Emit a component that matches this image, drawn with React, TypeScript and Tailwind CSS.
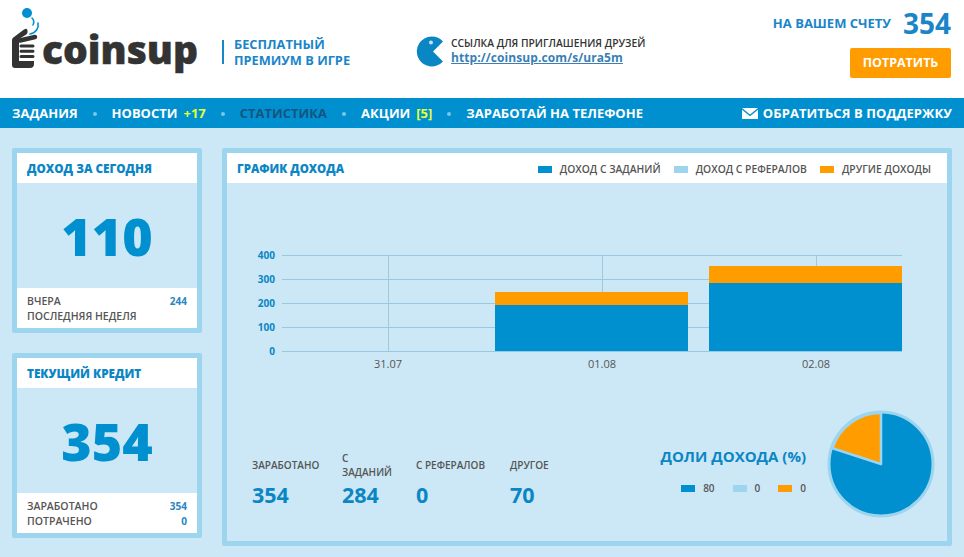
const font = { fontFamily: '"Open Sans", "Noto Sans", sans-serif' };

function Logo() {
  return (
    <div className="flex items-end w-[200px]">
      <svg width="31" height="70" viewBox="0 0 31 70" className="shrink-0">
        <circle cx="15" cy="7" r="5" fill="#0090d0" />
        <path d="M20 12c2 2 2 5 1 7" stroke="#0090d0" strokeWidth="1.600" fill="none" strokeLinecap="round" />
        <path d="M26 17c1 5-2 10-8 11" stroke="#0090d0" strokeWidth="1.600" fill="none" strokeLinecap="round" />
        <path d="M0 34q0-2 2-3l10-7.500q3-2 3.500 1t-2 4.500L7 33v22h15v3q0 4-4 4H3q-3 0-3-3z" fill="#333" />
        <path d="M8 34.500L23 31" stroke="#333" strokeWidth="4.500" strokeLinecap="round" />
        <path d="M9 40h12M9 45.200h12M9 50.400h12" stroke="#333" strokeWidth="3" strokeLinecap="round" />
      </svg>
      <span className="text-[39px] font-extrabold leading-none text-[#333] [-webkit-text-stroke:0.5px_#333] mb-[8px] -ml-[1px]">coinsup</span>
    </div>
  );
}

function NavDot() {
  return <span className="block w-[4px] h-[4px] rounded-full bg-[#7cc4e8]" />;
}

function Card({ title, value, rows }: { title: string; value: string; rows: [string, string][] }) {
  return (
    <div className="h-[185px] border-[5px] border-[#9dd5ee] rounded-[2px] flex flex-col">
      <div className="h-[30px] bg-white px-[10px] pt-[1px] flex items-center text-[11.700px] font-extrabold text-[#0b86c4]">{title}</div>
      <div className="flex-1 flex items-center justify-center text-[52px] font-extrabold text-[#0090d0] leading-none">{value}</div>
      <div className="h-[40px] bg-white px-[10px] flex flex-col justify-center gap-[1px]">
        {rows.map(([label, num]) => (
          <div key={label} className="flex justify-between text-[10.500px] leading-[14px] font-semibold text-[#555]">
            <span>{label}</span>
            <span className="text-[10px] font-bold text-[#2a85c0]">{num}</span>
          </div>
        ))}
      </div>
    </div>
  );
}

function Legend({ color, label }: { color: string; label: string }) {
  return (
    <div className="flex items-center gap-[8px]">
      <span className="w-[14px] h-[7px]" style={{ background: color }} />
      <span>{label}</span>
    </div>
  );
}

function Chart() {
  const ys = [72, 96, 120, 144, 168];
  const labels = ["400", "300", "200", "100", "0"];
  return (
    <svg width="720" height="200" viewBox="0 0 720 200" className="block">
      {ys.map((y, i) => (
        <g key={y}>
          <line x1="55" x2="675" y1={y + 0.5} y2={y + 0.5} stroke="#94cbe3" />
          <text x="48" y={y + 4} textAnchor="end" fontSize="10" fontWeight="700" fill="#0b86c4">
            {labels[i]}
          </text>
        </g>
      ))}
      {[161.5, 375.5, 589.5].map((x) => (
        <line key={x} x1={x} x2={x} y1="72" y2="168" stroke="#9fc8dc" />
      ))}
      <rect x="268" y="122" width="193" height="46" fill="#0090d0" />
      <rect x="268" y="109" width="193" height="13" fill="#ff9c00" />
      <rect x="482" y="100" width="193" height="68" fill="#0090d0" />
      <rect x="482" y="83" width="193" height="17" fill="#ff9c00" />
      {[
        [161, "31.07"],
        [375, "01.08"],
        [589, "02.08"],
      ].map(([x, t]) => (
        <text key={t} x={x} y="185" textAnchor="middle" fontSize="11" fill="#555">
          {t}
        </text>
      ))}
    </svg>
  );
}

function Pie() {
  return (
    <svg width="108" height="108" viewBox="0 0 108 108" className="block">
      <circle cx="54" cy="54" r="52" fill="#0090d0" stroke="#9dd5ee" strokeWidth="3" />
      <path d="M54 54L54 3A51 51 0 0 0 5.500 38.200Z" fill="#ff9c00" stroke="#9dd5ee" strokeWidth="2.500" strokeLinejoin="round" />
    </svg>
  );
}

function Stat({ label, value, className }: { label: string; value: string; className: string }) {
  return (
    <div className={className}>
      <div className="h-[34px] flex items-center text-[10px] leading-[14px] font-semibold text-[#555]">{label}</div>
      <div className="text-[21.500px] leading-[26px] font-bold text-[#0b86c4]">{value}</div>
    </div>
  );
}

export default function App() {
  return (
    <div style={font} className="w-[964px] h-[557px] overflow-hidden bg-[#cce8f6]">
      <header className="h-[98px] bg-white flex pl-[12px] pr-[13px] relative">
        <div className="mt-[6px] h-[70px]">
          <Logo />
        </div>
        <div className="ml-[10px] mt-[40px] h-[24px] border-l-2 border-[#1a85c8]" />
        <div className="ml-[10px] mt-[36px] text-[12.800px] leading-[16px] font-bold text-[#1a85c8]">
          <div>БЕСПЛАТНЫЙ</div>
          <div>ПРЕМИУМ В ИГРЕ</div>
        </div>
        <div className="ml-[66px] mt-[36px] flex">
          <svg width="31" height="31" viewBox="0 0 31 31" className="shrink-0">
            <path d="M15.500 0.500A15 15 0 0 1 27 5.500L17 15.500L27 25.500A15 15 0 1 1 15.500 0.500Z" fill="#0b86c4" />
            <circle cx="15" cy="6.500" r="2" fill="#bfe2f4" />
          </svg>
          <div className="ml-[4px]">
            <div className="text-[10.300px] leading-[14px] font-semibold text-[#333]">ССЫЛКА ДЛЯ ПРИГЛАШЕНИЯ ДРУЗЕЙ</div>
            <a className="block text-[12px] leading-[16px] tracking-[0.08px] font-bold text-[#3a7fb5] underline">http://coinsup.com/s/ura5m</a>
          </div>
        </div>
        <div className="ml-auto flex flex-col items-end pt-[6px]">
          <div className="flex items-center h-[34px]">
            <span className="mt-[2px] text-[13px] font-bold text-[#1a85c8]">НА ВАШЕМ СЧЕТУ</span>
            <span className="ml-[12px] text-[28px] leading-none font-bold text-[#1a85c8]">354</span>
          </div>
          <button className="mt-[8px] w-[101px] h-[30px] rounded-[2px] bg-[#ff9c00] text-white text-[12.500px] font-bold">ПОТРАТИТЬ</button>
        </div>
      </header>

      <nav className="h-[30px] pt-[1px] bg-[#0090d0] flex items-center px-[12px] text-[13px] font-bold text-white">
        <span>ЗАДАНИЯ</span>
        <span className="mx-[15px]"><NavDot /></span>
        <span>НОВОСТИ</span>
        <span className="ml-[6px] text-[#e4ff3a]">+17</span>
        <span className="mx-[15px]"><NavDot /></span>
        <span className="text-[#14547f]">СТАТИСТИКА</span>
        <span className="mx-[15px]"><NavDot /></span>
        <span>АКЦИИ</span>
        <span className="ml-[6px] text-[#e4ff3a]">[5]</span>
        <span className="mx-[15px]"><NavDot /></span>
        <span>ЗАРАБОТАЙ НА ТЕЛЕФОНЕ</span>
        <span className="ml-auto flex items-center gap-[5px] tracking-[0.09px]">
          <svg width="16" height="11" viewBox="0 0 16 11">
            <path d="M0 0h16L8 6.500z" fill="#fff" />
            <path d="M0 1.800L8 8.200l8-6.400V11H0z" fill="#fff" />
          </svg>
          ОБРАТИТЬСЯ В ПОДДЕРЖКУ
        </span>
      </nav>

      <main className="flex gap-[20px] px-[12px] pt-[20px]">
        <div className="w-[190px] flex flex-col gap-[20px]">
          <Card title="ДОХОД ЗА СЕГОДНЯ" value="110" rows={[["ВЧЕРА", "244"], ["ПОСЛЕДНЯЯ НЕДЕЛЯ", ""]]} />
          <Card title="ТЕКУЩИЙ КРЕДИТ" value="354" rows={[["ЗАРАБОТАНО", "354"], ["ПОТРАЧЕНО", "0"]]} />
        </div>
        <div className="w-[730px] h-[398px] border-[5px] border-[#9dd5ee] rounded-[2px] flex flex-col">
          <div className="h-[30px] bg-white flex items-center justify-between pt-[1px] pl-[10px] pr-[16px]">
            <span className="text-[11.500px] font-extrabold text-[#0b86c4]">ГРАФИК ДОХОДА</span>
            <div className="flex gap-[13px] mt-[2px] text-[10.300px] font-semibold text-[#555]">
              <Legend color="#0090d0" label="ДОХОД С ЗАДАНИЙ" />
              <Legend color="#9dd5ee" label="ДОХОД С РЕФЕРАЛОВ" />
              <Legend color="#ff9c00" label="ДРУГИЕ ДОХОДЫ" />
            </div>
          </div>
          <Chart />
          <div className="flex-1 flex pl-[25px]">
            <div className="flex pt-[65px]">
              <Stat label="ЗАРАБОТАНО" value="354" className="w-[90px]" />
              <Stat label="С ЗАДАНИЙ" value="284" className="w-[74px] pr-[20px]" />
              <Stat label="С РЕФЕРАЛОВ" value="0" className="w-[94px]" />
              <Stat label="ДРУГОЕ" value="70" className="w-[60px]" />
            </div>
            <div className="ml-auto mr-[12px] flex">
              <div className="mt-[62px] flex flex-col items-end">
                <div className="text-[15px] leading-[22px] font-bold text-[#0b86c4]">ДОЛИ ДОХОДА (%)</div>
                <div className="mt-[15px] flex gap-[18px] text-[10px] leading-[13px] font-semibold text-[#555]">
                  <Legend color="#0090d0" label="80" />
                  <Legend color="#9dd5ee" label="0" />
                  <Legend color="#ff9c00" label="0" />
                </div>
              </div>
              <div className="ml-[21px] mt-[27px]">
                <Pie />
              </div>
            </div>
          </div>
        </div>
      </main>
    </div>
  );
}
